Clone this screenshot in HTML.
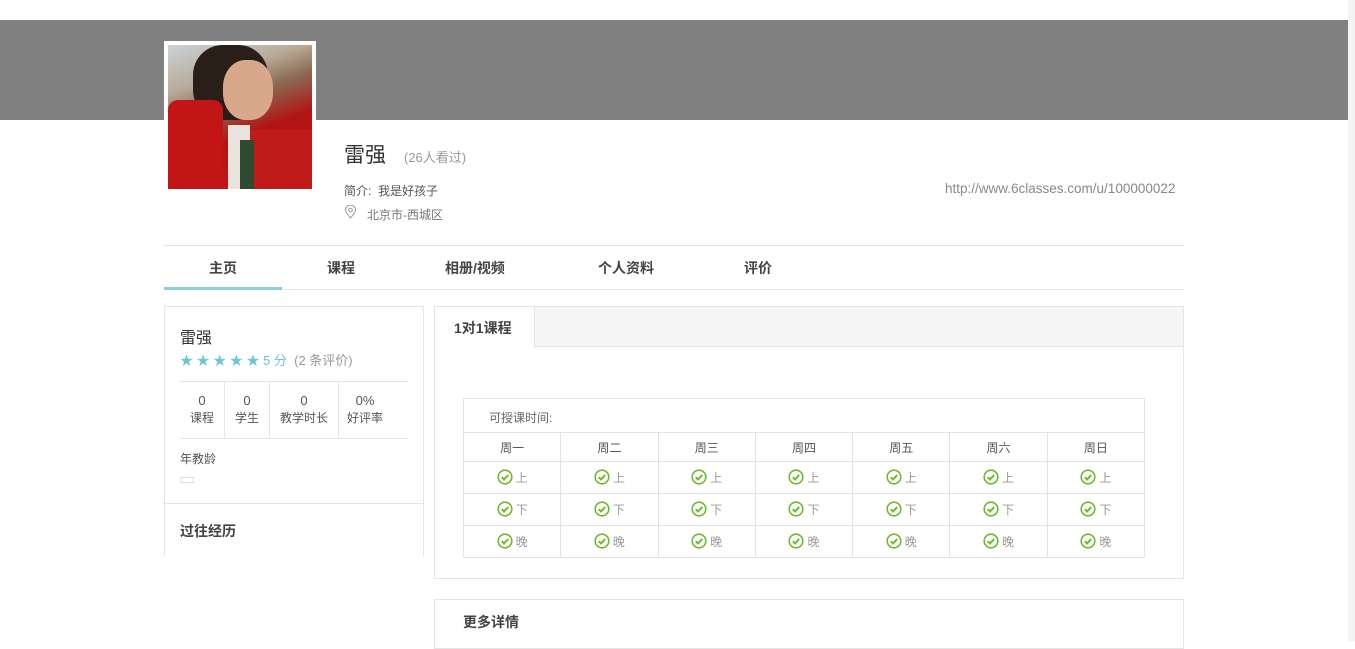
<!DOCTYPE html>
<html><head><meta charset="utf-8">
<style>
*{margin:0;padding:0;box-sizing:border-box}
body{width:1355px;height:641px;overflow:hidden;background:#fff;font-family:"Liberation Sans","Noto Sans CJK SC",sans-serif;color:#555;position:relative}
.a{position:absolute}
.banner{left:0;top:20px;width:1348px;height:100px;background:#808080}
.sb{left:1348px;top:0;width:7px;height:641px;background:#f4f4f4}
.av{left:164px;top:41px;width:152px;height:152px;background:#fff;padding:4px}
.photo{width:144px;height:144px;position:relative;overflow:hidden;background:linear-gradient(160deg,#c9d3d6 0%,#b9aa98 25%,#8a6a52 40%,#b21414 60%,#c41818 100%)}
.t{font-size:12px;white-space:nowrap}
.tab{font-size:14px;font-weight:bold;color:#444;top:258px}
table{border-collapse:collapse}
td{border:1px solid #e3e3e3;text-align:center;font-size:12px;color:#999;height:32px;width:97px;padding:0}
.ck{display:inline-block;width:16px;height:16px;vertical-align:-3px;margin-right:3px}
</style></head><body>
<div class="a banner"></div>
<div class="a sb"></div>
<div class="a av"><div class="photo">
<div class="a" style="left:25px;top:0;width:75px;height:75px;border-radius:40%;background:#2a1e18"></div>
<div class="a" style="left:55px;top:15px;width:50px;height:60px;border-radius:45%;background:#d9a88c"></div>
<div class="a" style="left:0;top:55px;width:55px;height:89px;background:#c21515;border-radius:10px 10px 0 0"></div>
<div class="a" style="left:70px;top:85px;width:74px;height:59px;background:#c01a1a"></div>
<div class="a" style="left:60px;top:80px;width:22px;height:64px;background:#e8e3dc"></div>
<div class="a" style="left:72px;top:95px;width:14px;height:49px;background:#2f4a30"></div>
</div></div>
<div class="a" style="left:344px;top:139px;font-size:21px;color:#333">雷强</div>
<div class="a t" style="left:404px;top:147px;color:#999;font-size:13px">(26人看过)</div>
<div class="a t" style="left:344px;top:182px;color:#555">简介:&nbsp; 我是好孩子</div>
<svg class="a" style="left:344px;top:205px" width="13" height="14" viewBox="0 0 13 14"><path d="M6.5 13C3 9 1.5 7 1.5 5a5 5 0 0110 0c0 2-1.5 4-5 8z" fill="none" stroke="#999"/><circle cx="6.5" cy="5" r="1.8" fill="none" stroke="#999"/></svg>
<div class="a t" style="left:367px;top:206px;color:#777">北京市-西城区</div>
<div class="a t" style="left:945px;top:181px;color:#888;font-size:13.5px">http://www.6classes.com/u/100000022</div>
<div class="a" style="left:164px;top:245px;width:1020px;height:1px;background:#e5e5e5"></div>
<div class="a" style="left:164px;top:289px;width:1020px;height:1px;background:#e5e5e5"></div>
<div class="a" style="left:164px;top:287px;width:118px;height:3px;background:#8ccfd6"></div>
<div class="a tab" style="left:209px">主页</div>
<div class="a tab" style="left:327px">课程</div>
<div class="a tab" style="left:445px">相册/视频</div>
<div class="a tab" style="left:598px">个人资料</div>
<div class="a tab" style="left:744px">评价</div>

<div class="a" style="left:164px;top:306px;width:260px;height:250px;border:1px solid #e5e5e5;border-bottom:none"></div>
<div class="a" style="left:180px;top:324px;font-size:16px;color:#333">雷强</div>
<div class="a t" style="left:180px;top:350px;color:#6cc5cf;font-size:13px">★ ★ ★ ★ ★ 5 分 <span style="color:#999">&nbsp;(2 条评价)</span></div>
<div class="a" style="left:180px;top:381px;width:228px;height:1px;background:#e5e5e5"></div>
<div class="a" style="left:180px;top:438px;width:228px;height:1px;background:#e5e5e5"></div>
<div class="a" style="left:224px;top:382px;width:1px;height:56px;background:#e5e5e5"></div>
<div class="a" style="left:269px;top:382px;width:1px;height:56px;background:#e5e5e5"></div>
<div class="a" style="left:338px;top:382px;width:1px;height:56px;background:#e5e5e5"></div>
<div class="a t" style="left:180px;top:392px;width:44px;text-align:center;line-height:17px;font-size:13px">0<br><span style="font-size:12px">课程</span></div>
<div class="a t" style="left:225px;top:392px;width:44px;text-align:center;line-height:17px;font-size:13px">0<br><span style="font-size:12px">学生</span></div>
<div class="a t" style="left:270px;top:392px;width:68px;text-align:center;line-height:17px;font-size:13px">0<br><span style="font-size:12px">教学时长</span></div>
<div class="a t" style="left:339px;top:392px;width:52px;text-align:center;line-height:17px;font-size:13px">0%<br><span style="font-size:12px">好评率</span></div>
<div class="a t" style="left:180px;top:450px;color:#555">年教龄</div>
<div class="a" style="left:180px;top:477px;width:14px;height:6px;border:1px solid #ddd"></div>
<div class="a" style="left:165px;top:503px;width:258px;height:1px;background:#e5e5e5"></div>
<div class="a" style="left:180px;top:521px;font-size:14px;font-weight:bold;color:#444">过往经历</div>

<div class="a" style="left:434px;top:306px;width:750px;height:273px;border:1px solid #e5e5e5"></div>
<div class="a" style="left:435px;top:307px;width:748px;height:40px;background:#f5f5f5;border-bottom:1px solid #e5e5e5"></div>
<div class="a" style="left:435px;top:307px;width:100px;height:41px;background:#fff;border-right:1px solid #e5e5e5"></div>
<div class="a" style="left:454px;top:318px;font-size:14px;font-weight:bold;color:#444">1对1课程</div>
<div class="a" style="left:463px;top:398px;width:682px;height:35px;border:1px solid #e3e3e3;border-bottom:none"></div>
<div class="a t" style="left:489px;top:409px;color:#666">可授课时间:</div>
<table class="a" style="left:463px;top:432px;width:682px">
<tr><td style="height:29px;color:#555">周一</td><td style="color:#555">周二</td><td style="color:#555">周三</td><td style="color:#555">周四</td><td style="color:#555">周五</td><td style="color:#555">周六</td><td style="color:#555">周日</td></tr>
<tr id="r1"></tr><tr id="r2"></tr><tr id="r3"></tr>
</table>
<div class="a" style="left:434px;top:599px;width:750px;height:50px;border:1px solid #e5e5e5"></div>
<div class="a" style="left:463px;top:612px;font-size:14px;font-weight:bold;color:#444">更多详情</div>
<script>
var ck='<svg class="ck" viewBox="0 0 16 16"><circle cx="8" cy="8" r="6.8" fill="none" stroke="#6fba2c" stroke-width="1.6"/><path d="M4.8 8.2l2.2 2.2 4.2-4.3" fill="none" stroke="#6fba2c" stroke-width="2"/></svg>';
['上','下','晚'].forEach(function(w,i){var h='';for(var j=0;j<7;j++)h+='<td style="height:32px">'+ck+w+'</td>';document.getElementById('r'+(i+1)).innerHTML=h;});
document.querySelectorAll('table tr:first-child td').forEach(function(t){t.style.height='29px'});
</script>
</body></html>
